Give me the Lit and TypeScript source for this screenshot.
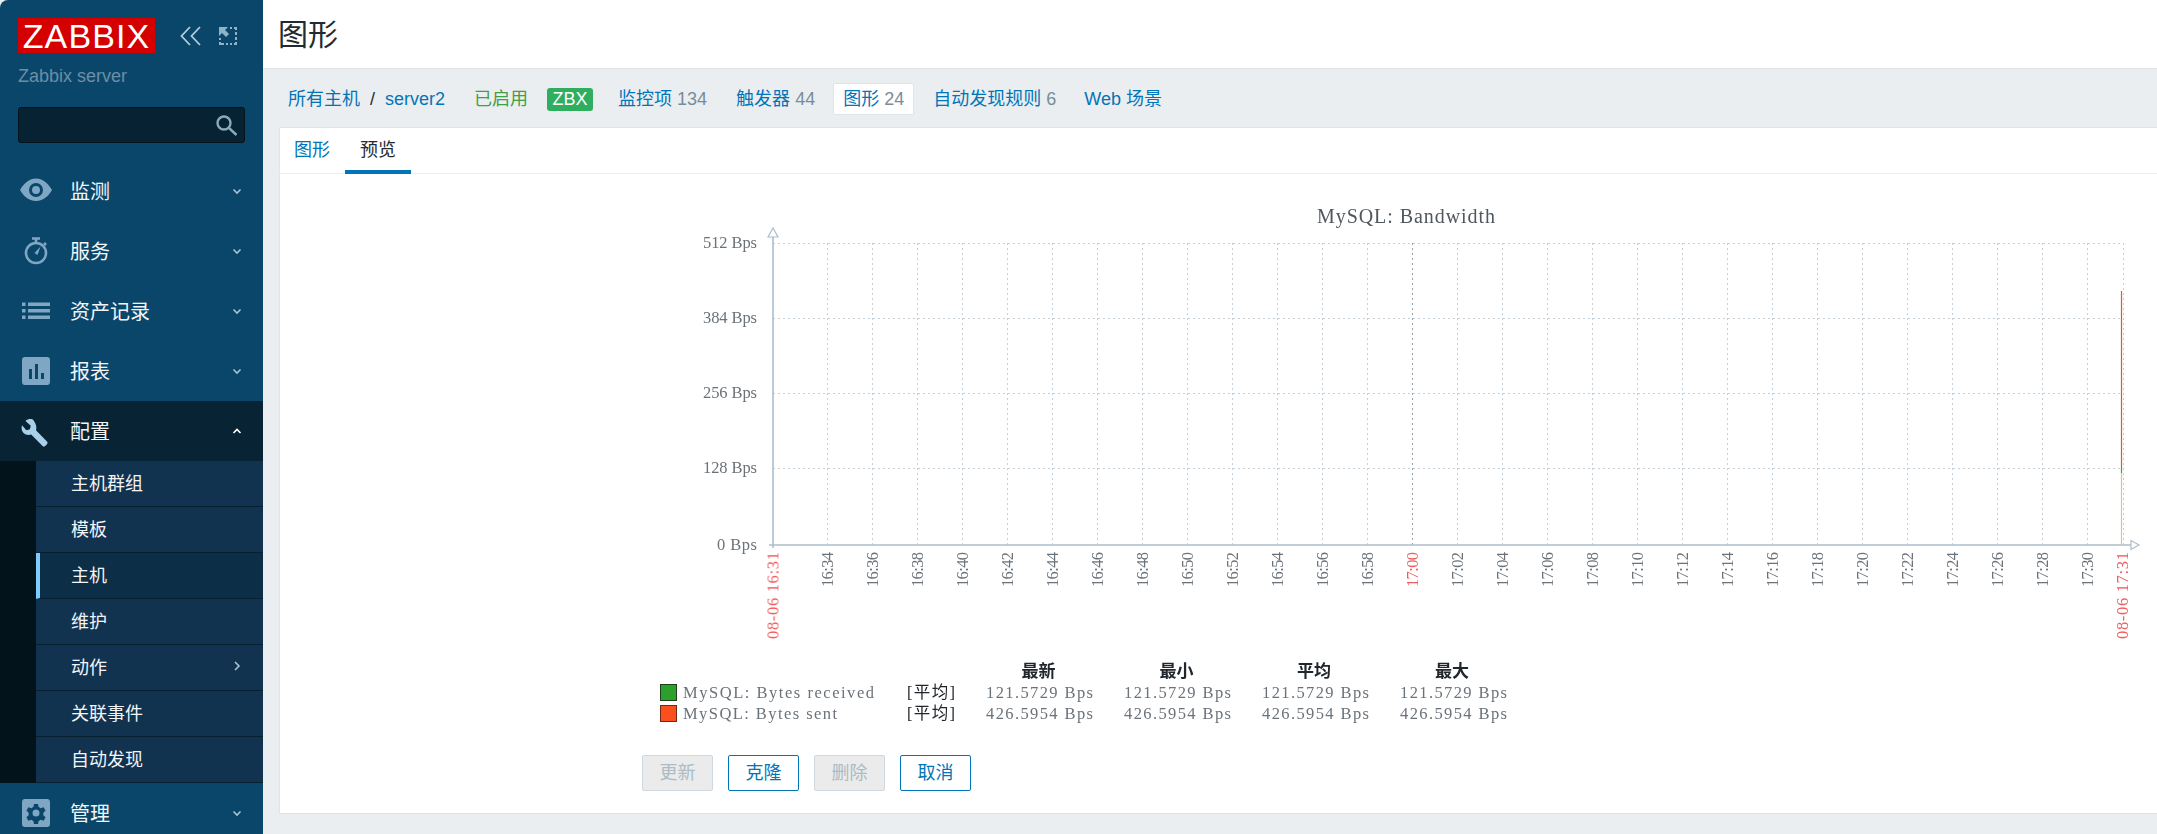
import { LitElement, html, css, svg } from 'lit';
import { customElement } from 'lit/decorators.js';

const chev = (up = false) => html`<svg class="chev" viewBox="0 0 10 10">
  <polyline points=${up ? '1.500,7 5,3.500 8.500,7' : '1.500,3.500 5,7 8.500,3.500'}></polyline>
</svg>`;

const icons = {
  eye: svg`<path transform="translate(0 -1)" fill-rule="evenodd" d="M16 4.500C8.500 4.500 3 10.500 0 16c3 5.500 8.500 11 16 11s13-5.500 16-11c-3-5.500-8.500-11.500-16-11.500zM16 9a7 7 0 1 1 0 14 7 7 0 0 1 0-14zM16 12a4 4 0 1 0 0 8 4 4 0 0 0 0-8z"/>`,
  watch: svg`<g fill="none" stroke="currentColor" stroke-width="2.6"><circle cx="16" cy="18" r="10"/><path d="M12 3.500h8M16 3.500v4M24 8l2 2"/></g><path d="M20.500 11.500l-3 8.500-3-2z"/>`,
  list: svg`<path d="M2 7.500h3.500V11H2zM2 14h3.500v3.500H2zM2 20.500h3.500V24H2zM8 7.500h22V11H8zM8 14h22v3.500H8zM8 20.500h22V24H8z"/>`,
  report: svg`<path fill-rule="evenodd" d="M5 2h22a3 3 0 0 1 3 3v22a3 3 0 0 1-3 3H5a3 3 0 0 1-3-3V5a3 3 0 0 1 3-3zM9 14v10h3V14zM15 9v15h3V9zM21 18v6h3v-6z"/>`,
  wrench: svg`<path transform="translate(2 2) scale(.875)" d="M12 2.500c-3-.5-6 0-8 2l6 5.500-1 4-4 1-5-5.500c-1 3-.5 6 1.500 8.500 2.500 2.500 6 3 9 2l13 13c1 1 2 1 3 0l2-2c1-1 1-2 0-3L16 15c1-3 .500-7.500-4-12.500z"/>`,
  gear: svg`<path fill-rule="evenodd" d="M5 2h22a3 3 0 0 1 3 3v22a3 3 0 0 1-3 3H5a3 3 0 0 1-3-3V5a3 3 0 0 1 3-3zM14 7l-.6 3a6.500 6.500 0 0 0-2 1.200l-3-1-2 3.500 2.300 2a6.500 6.500 0 0 0 0 2.600l-2.300 2 2 3.500 3-1a6.500 6.500 0 0 0 2 1.200l.6 3h4l.6-3a6.500 6.500 0 0 0 2-1.200l3 1 2-3.500-2.300-2a6.500 6.500 0 0 0 0-2.600l2.300-2-2-3.500-3 1a6.500 6.500 0 0 0-2-1.200L18 7zM16 12.500a3.500 3.500 0 1 1 0 7 3.500 3.500 0 0 1 0-7z"/>`,
};

const menuTop = [
  { label: '监测', icon: icons.eye },
  { label: '服务', icon: icons.watch },
  { label: '资产记录', icon: icons.list },
  { label: '报表', icon: icons.report },
];

const subItems = ['主机群组', '模板', '主机', '维护', '动作', '关联事件', '自动发现'];

// chart geometry, in page pixels (the svg viewBox starts at the panel corner)
const left = 772;
const right = 2122;
const top = 243;
const bottom = 545;
const gridYs = [243, 318, 393, 468];
const yLabels = ['512 Bps', '384 Bps', '256 Bps', '128 Bps', '0 Bps'];

const timeTicks: { x: number; label: string; red: boolean }[] = [];
for (let i = 0; i <= 28; i++) {
  const mins = 34 + i * 2;
  const h = mins >= 60 ? 17 : 16;
  const m = String(mins % 60).padStart(2, '0');
  timeTicks.push({ x: 826 + i * 45, label: `${h}:${m}`, red: mins === 60 });
}

const legendCols = [
  { x: 985, head: '最新', cx: 1037.5 },
  { x: 1123, head: '最小', cx: 1175.5 },
  { x: 1261, head: '平均', cx: 1313 },
  { x: 1399, head: '最大', cx: 1451 },
];

const legendRows = [
  { y: 693, box: 684, fill: '#2ca02c', edge: '#1d3f1d', name: 'MySQL: Bytes received', nameLen: 191, value: '121.5729 Bps' },
  { y: 714, box: 705, fill: '#fb4f1e', edge: '#6d2a14', name: 'MySQL: Bytes sent', nameLen: 154, value: '426.5954 Bps' },
];

function chart() {
  return svg`
    <g class="grid">
      ${gridYs.map((y) => svg`<line x1=${left} x2=${right} y1=${y} y2=${y}></line>`)}
      ${timeTicks.map((t) => svg`<line class=${t.red ? 'dark' : ''} x1=${t.x} x2=${t.x} y1=${top} y2=${bottom}></line>`)}
      <line x1=${right} x2=${right} y1=${top} y2=${bottom}></line>
    </g>
    <g class="axis">
      <line x1=${left} x2=${left} y1="237" y2="548"></line>
      <line x1="768" x2="2130" y1=${bottom} y2=${bottom}></line>
      <polygon points="767,237 777,237 772,228"></polygon>
      <polygon points="2130,540.500 2130,549.500 2138,545"></polygon>
    </g>
    <line x1="2120.500" x2="2120.500" y1="291" y2="468" stroke="#f4511e" stroke-width="1.2"></line>
    <line x1="2120.500" x2="2120.500" y1="468" y2="473" stroke="#6f8f2a" stroke-width="1.2"></line>
    <line x1="2120.500" x2="2120.500" y1="473" y2="545" stroke="#d9c0a0" stroke-width="1.2"></line>
    <g class="txt">
      <text class="title" x="1316" y="223" textLength="178">MySQL: Bandwidth</text>
      ${yLabels.map((l, i) => {
        const y = i < 4 ? gridYs[i] : bottom;
        const w = i < 4 ? 54 : 40;
        return svg`<text x=${756 - w} y=${y + 5} textLength=${w}>${l}</text>`;
      })}
      ${timeTicks.map(
        (t) => svg`<text class=${t.red ? 'red' : ''} transform="translate(${t.x + 5.5} 587) rotate(-90)" textLength="35">${t.label}</text>`,
      )}
      <text class="red" transform="translate(777.500 639) rotate(-90)" textLength="87">08-06 16:31</text>
      <text class="red" transform="translate(2127 639) rotate(-90)" textLength="87">08-06 17:31</text>
      ${legendCols.map((c) => svg`<text class="head" x=${c.cx} y="677" text-anchor="middle">${c.head}</text>`)}
      ${legendRows.map(
        (r) => svg`
          <rect x="659.500" y=${r.box + 0.5} width="16" height="16" fill=${r.fill} stroke=${r.edge}></rect>
          <text x="682" y=${r.y + 5} textLength=${r.nameLen}>${r.name}</text>
          <text class="avg" x="906" y=${r.y + 5} textLength="48">[平均]</text>
          ${legendCols.map((c) => svg`<text x=${c.x} y=${r.y + 5} textLength="107">${r.value}</text>`)}
        `,
      )}
    </g>
  `;
}

@customElement('app-root')
export class AppRoot extends LitElement {
  static styles = css`
    :host {
      display: block;
      height: 834px;
      overflow: hidden;
      font-family: 'Liberation Sans', 'Noto Sans CJK SC', sans-serif;
      font-size: 18px;
      color: #1f2c33;
    }

    .page {
      display: flex;
      height: 834px;
      background: #ebeef0;
    }

    /* sidebar */
    .side {
      width: 263px;
      flex: none;
      overflow: hidden;
      background: #0a466a;
      border-top-left-radius: 8px;
      color: #f2f5f7;
    }
    .brand {
      display: flex;
      align-items: center;
      padding: 18px 0 0 18px;
    }
    .logo {
      width: 137px;
      height: 35px;
      background: #d40000;
      color: #fff;
      font-size: 34px;
      line-height: 36px;
      letter-spacing: 1.1px;
      text-align: center;
    }
    .collapse {
      width: 22px;
      height: 20px;
      margin-left: 25px;
      fill: none;
      stroke: #b5cbd9;
      stroke-width: 1.8;
    }
    .expand {
      width: 20px;
      height: 20px;
      margin-left: 16px;
      fill: #90b3ca;
      stroke: none;
    }
    .server {
      padding: 12px 0 0 18px;
      height: 22px;
      line-height: 22px;
      color: #6d8ea5;
    }
    .search {
      position: relative;
      box-sizing: border-box;
      height: 36px;
      margin: 20px 18px 0;
      background: #072233;
      border: 1px solid #04121b;
      border-radius: 3px;
    }
    .search svg {
      position: absolute;
      right: 6px;
      top: 6px;
      width: 23px;
      height: 23px;
      fill: none;
      stroke: #89a9bd;
      stroke-width: 2.4;
    }
    .menu {
      margin-top: 18px;
    }
    .row {
      display: flex;
      align-items: center;
      height: 60px;
      padding-left: 20px;
      font-size: 20px;
    }
    .row.open {
      background: #082334;
    }
    .row .ico {
      width: 32px;
      height: 32px;
      flex: none;
      fill: #7fa6c2;
      color: #7fa6c2;
    }
    .row.open .ico {
      fill: #a9d0e9;
    }
    .row .name {
      flex: 1;
      margin: 0 0 2px 18px;
    }
    .chev {
      width: 10px;
      height: 10px;
      margin-right: 21px;
      fill: none;
      stroke: #a9c3d4;
      stroke-width: 1.6;
    }
    .row.open .chev {
      stroke: #fff;
    }
    .sub {
      padding-left: 36px;
      background: #03131c;
    }
    .sub-item {
      box-sizing: border-box;
      display: flex;
      align-items: center;
      height: 46px;
      padding: 0 0 3px 35px;
      background: #113350;
      border-bottom: 1px solid #06202f;
    }
    .sub-item.active {
      padding-left: 31px;
      background: #0d2e47;
      border-left: 4px solid #7dcbff;
    }
    .sub-item span {
      flex: 1;
    }

    /* main column */
    .main {
      flex: 1;
      min-width: 0;
      display: flex;
      flex-direction: column;
    }
    .head {
      box-sizing: border-box;
      height: 69px;
      padding-left: 15px;
      background: #fff;
      border-bottom: 1px solid #dfe4e7;
      font-size: 30px;
      line-height: 69px;
    }
    .nav {
      box-sizing: border-box;
      display: flex;
      align-items: center;
      height: 58px;
      padding: 2px 0 0 15px;
      gap: 9px;
      line-height: 24px;
      color: #0275b8;
    }
    .nav .crumb {
      padding: 0 10px;
      display: flex;
      gap: 10px;
    }
    .nav .slash {
      color: #1f2c33;
    }
    .nav .item {
      padding: 0 10px;
      height: 32px;
      line-height: 32px;
      box-sizing: border-box;
    }
    .nav .count {
      color: #768d99;
    }
    .nav .on {
      color: #429e47;
    }
    .nav .badge {
      width: 46px;
      height: 23px;
      line-height: 23px;
      margin-right: 6px;
      text-align: center;
      color: #fff;
      background: #2fae60;
      border-radius: 3px;
    }
    .nav .cur {
      margin-left: -1px;
      background: #fff;
      border: 1px solid #dfe4e7;
      border-radius: 2px;
      padding: 0 9px;
      line-height: 30px;
    }
    .nav .last {
      margin-left: -1px;
    }
    .panel {
      flex: none;
      box-sizing: border-box;
      height: 687px;
      margin-left: 16px;
      background: #fff;
      border: 1px solid #dfe4e7;
      border-right: 0;
    }
    .tabs {
      display: flex;
      height: 46px;
      margin-left: -1px;
      border-bottom: 1px solid #ebeef0;
      color: #0275b8;
      box-sizing: border-box;
    }
    .tabs div {
      box-sizing: border-box;
      height: 46px;
      padding: 0 15px;
      line-height: 44px;
    }
    .tabs .cur {
      color: #1f2c33;
      border-bottom: 4px solid #0275b8;
    }
    .plot {
      display: block;
      width: 1877px;
      height: 581px;
    }
    .grid line {
      stroke: #c3d0d9;
      stroke-width: 1;
      stroke-dasharray: 2 3;
      shape-rendering: crispEdges;
    }
    .grid line.dark {
      stroke: #93a3ad;
    }
    .axis line {
      stroke: #acbecb;
      stroke-width: 1.6;
    }
    .axis polygon {
      fill: #fff;
      stroke: #acbecb;
      stroke-width: 1.2;
    }
    .txt {
      filter: blur(0.4px);
      font-family: 'Liberation Serif', 'Noto Sans CJK SC', serif;
      font-size: 16.500px;
      fill: #6b737a;
    }
    .txt .title {
      font-size: 20px;
      fill: #50575d;
    }
    .txt .red {
      fill: #f25c5c;
    }
    .txt .head {
      font-size: 17px;
      font-weight: 700;
      fill: #20262b;
    }
    .txt .avg {
      fill: #20262b;
    }
    .btns {
      display: flex;
      gap: 15px;
      padding-left: 362px;
    }
    .btn {
      box-sizing: border-box;
      width: 71px;
      height: 36px;
      line-height: 34px;
      text-align: center;
      color: #0275b8;
      background: #fff;
      border: 1px solid #0275b8;
      border-radius: 2px;
    }
    .btn.off {
      color: #acbbc4;
      background: #ebebeb;
      border-color: #cfd8de;
    }
  `;

  render() {
    return html`
      <div class="page">
        <aside class="side">
          <div class="brand">
            <div class="logo">ZABBIX</div>
            <svg class="collapse" viewBox="0 0 22 20"><path d="M10 1 1.500 10 10 19M20 1l-8.500 9 8.500 9"></path></svg>
            <svg class="expand" viewBox="0 0 20 20">
              <path d="M1 1h9L7 4l4 4-3 3-4-4-3 3z"></path>
              <path d="M12 1h2v2h-2zM16 1h3v3h-2V3h-1zM17 6h2v3h-2zM17 11h2v3h-2zM17 16h2v3h-3v-2h1zM12 17h2v2h-2zM8 17h2v2H8zM4 17h2v2H4zM1 16h2v1h1v2H1zM1 12h2v2H1z"></path>
            </svg>
          </div>
          <div class="server">Zabbix server</div>
          <div class="search">
            <svg viewBox="0 0 23 23"><circle cx="9" cy="9" r="6.500"></circle><path d="M14 14l7.500 7"></path></svg>
          </div>
          <nav class="menu">
            ${menuTop.map(
              (m) => html`<div class="row">
                <svg class="ico" viewBox="0 0 32 32">${m.icon}</svg>
                <span class="name">${m.label}</span>
                ${chev()}
              </div>`,
            )}
            <div class="row open">
              <svg class="ico" viewBox="0 0 32 32">${icons.wrench}</svg>
              <span class="name">配置</span>
              ${chev(true)}
            </div>
            <div class="sub">
              ${subItems.map(
                (s) => html`<div class="sub-item ${s === '主机' ? 'active' : ''}">
                  <span>${s}</span>
                  ${s === '动作'
                    ? html`<svg class="chev" viewBox="0 0 10 10"><polyline points="3,1 7,5 3,9"></polyline></svg>`
                    : ''}
                </div>`,
              )}
            </div>
            <div class="row">
              <svg class="ico" viewBox="0 0 32 32">${icons.gear}</svg>
              <span class="name">管理</span>
              ${chev()}
            </div>
          </nav>
        </aside>
        <main class="main">
          <header class="head">图形</header>
          <div class="nav">
            <div class="crumb"><span>所有主机</span><span class="slash">/</span><span>server2</span></div>
            <div class="item on">已启用</div>
            <div class="badge">ZBX</div>
            <div class="item">监控项 <span class="count">134</span></div>
            <div class="item">触发器 <span class="count">44</span></div>
            <div class="item cur">图形 <span class="count">24</span></div>
            <div class="item">自动发现规则 <span class="count">6</span></div>
            <div class="item last">Web 场景</div>
          </div>
          <section class="panel">
            <div class="tabs"><div>图形</div><div class="cur">预览</div></div>
            <svg class="plot" viewBox="279 174 1877 581">${chart()}</svg>
            <div class="btns">
              <div class="btn off">更新</div>
              <div class="btn">克隆</div>
              <div class="btn off">删除</div>
              <div class="btn">取消</div>
            </div>
          </section>
        </main>
      </div>
    `;
  }
}
